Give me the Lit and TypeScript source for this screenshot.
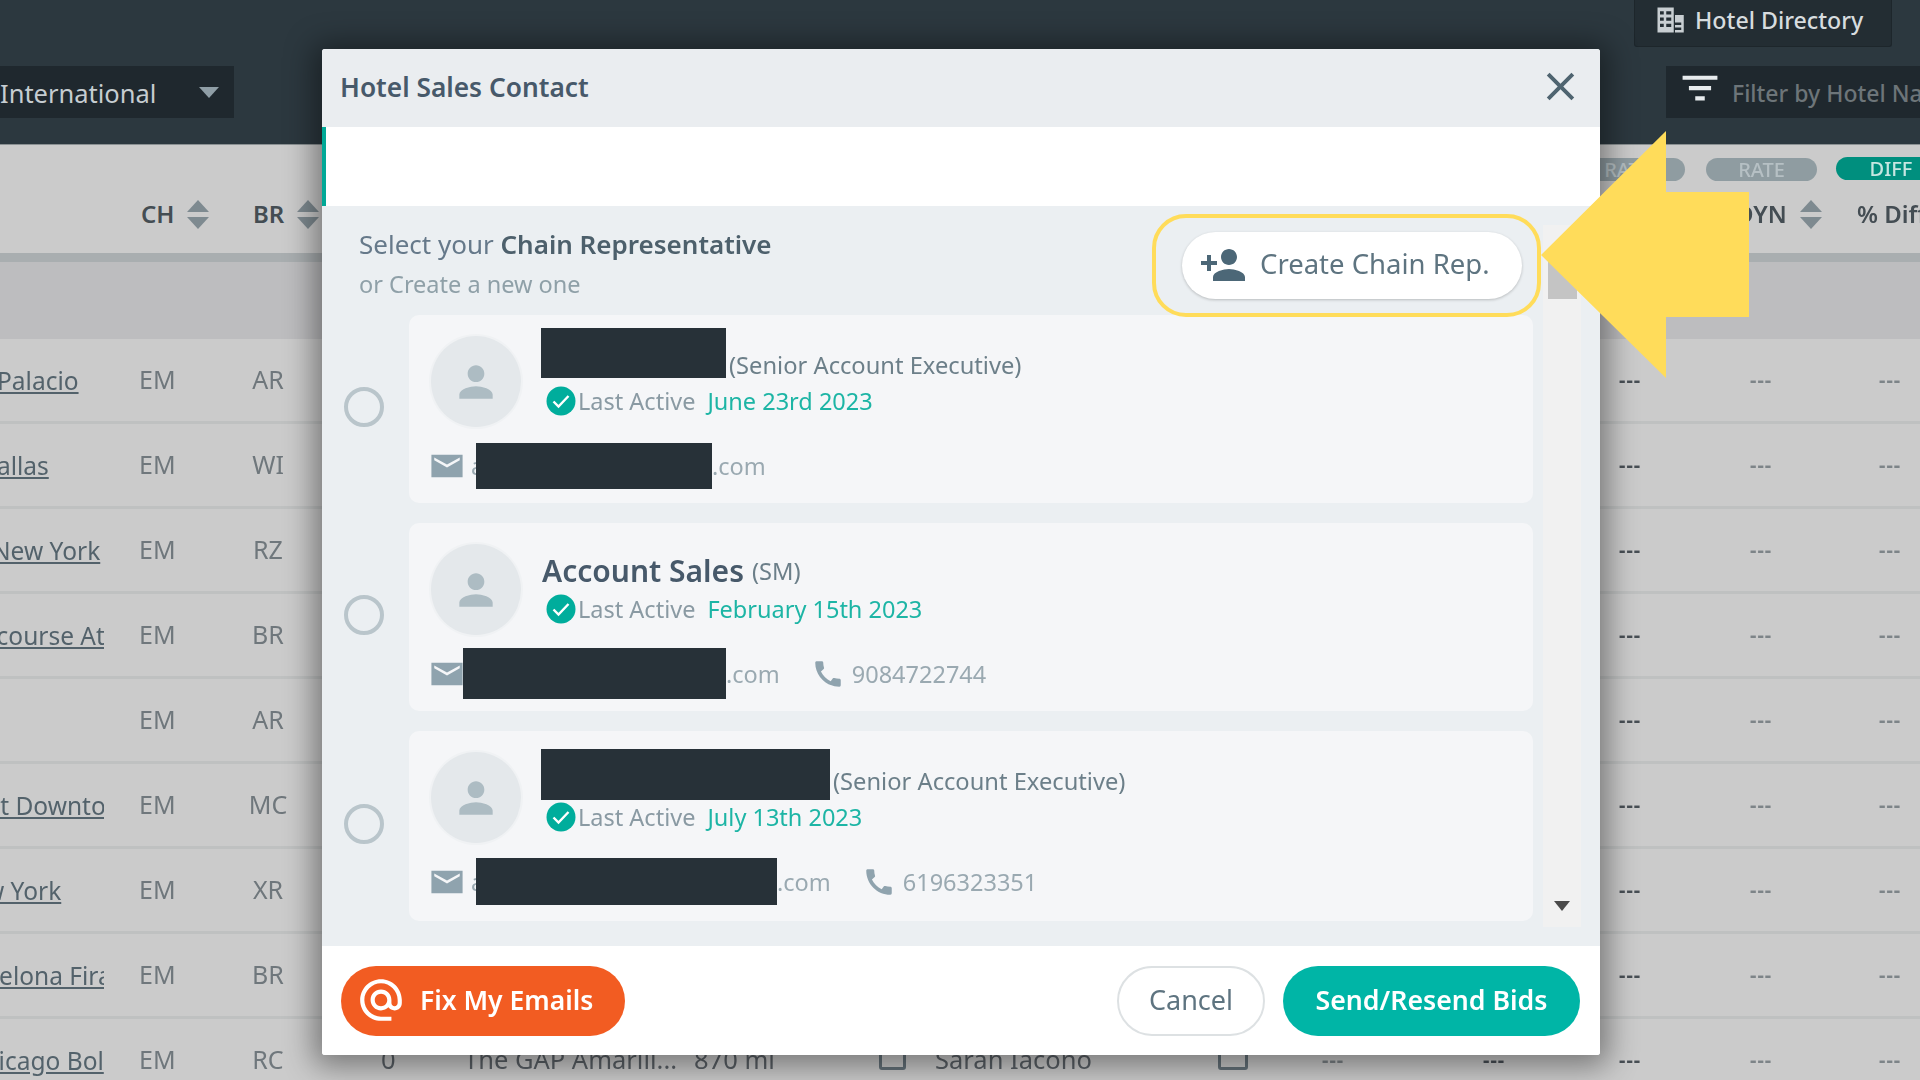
import { LitElement, html, css } from "lit";
import { customElement } from "lit/decorators.js";

const icon = (d: string, cls: string) => html`<svg class=${cls} viewBox="0 0 24 24" fill="currentColor"><path d=${d}></path></svg>`;
const P = {
  person: "M12 12c2.21 0 4-1.79 4-4s-1.79-4-4-4-4 1.79-4 4 1.79 4 4 4zm0 2c-2.67 0-8 1.34-8 4v2h16v-2c0-2.66-5.33-4-8-4z",
  add: "M15 12c2.21 0 4-1.79 4-4s-1.79-4-4-4-4 1.79-4 4 1.79 4 4 4zm-9-2V7H4v3H1v2h3v3h2v-3h3v-2H6zm9 4c-2.67 0-8 1.34-8 4v2h16v-2c0-2.66-5.33-4-8-4z",
  mail: "M23 4H1v16h22V4zm-2 4l-9 5-9-5V6l9 5 9-5v2z",
  phone: "M20.01 15.38c-1.23 0-2.42-.2-3.53-.56-.35-.12-.74-.03-1.01.24l-1.57 1.97c-2.83-1.35-5.48-3.9-6.89-6.83l1.95-1.66c.27-.28.35-.67.24-1.02-.37-1.11-.56-2.3-.56-3.53 0-.54-.45-.99-.99-.99H4.19C3.65 3 3 3.24 3 3.99 3 13.28 10.73 21 20.01 21c.71 0 .99-.63.99-1.18v-3.45c0-.54-.45-.99-.99-.99z",
  at: "M12 2C6.48 2 2 6.48 2 12s4.48 10 10 10h5v-2h-5c-4.34 0-8-3.66-8-8s3.66-8 8-8 8 3.66 8 8v1.43c0 .79-.71 1.57-1.5 1.57s-1.5-.78-1.5-1.57V12c0-2.76-2.24-5-5-5s-5 2.24-5 5 2.24 5 5 5c1.38 0 2.64-.56 3.54-1.47.65.89 1.77 1.47 2.96 1.47 1.97 0 3.5-1.6 3.5-3.57V12c0-5.52-4.48-10-10-10zm0 13c-1.66 0-3-1.34-3-3s1.34-3 3-3 3 1.34 3 3-1.34 3-3 3z",
  filter: "M1 3h22v2.6H1V3zm4 6.5h14v2.6H5V9.500zM9 16h6v2.6H9V16z",
  close: "M19 6.41L17.59 5 12 10.59 6.41 5 5 6.41 10.59 12 5 17.59 6.41 19 12 13.41 17.59 19 19 17.59 13.41 12z",
  building: "M2 2h13v20H2V2zm2 3v2.500h3V5H4zm5 0v2.500h4V5H9zM4 10v2.500h3V10H4zm5 0v2.500h4V10H9zm-5 5v2.500h3V15H4zm5 0v2.500h4V15H9zm7-7h7v14h-7v-2h5v-2h-5v-2h5v-2h-5V8z",
};

const rows = [
  ["Palacio", -3, "EM", "AR"],
  ["Dallas", -21, "EM", "WI"],
  ["New York", -8, "EM", "RZ"],
  ["Racecourse At", -58, "EM", "BR"],
  ["", 0, "EM", "AR"],
  ["Hyatt Downtown", -53, "EM", "MC"],
  ["New York", -47, "EM", "XR"],
  ["Barcelona Fira", -52, "EM", "BR"],
  ["Chicago Bol", -32, "EM", "RC"],
] as [string, number, string, string][];

const reps = [
  { redactName: [185, -36, 50], role: "(Senior Account Executive)", date: "June 23rd 2023", lead: "a", redactMail: [236, 45, -6, 46], phone: "" },
  { name: "Account Sales", role: "(SM)", date: "February 15th 2023", lead: "", redactMail: [263, 32, -9, 51], phone: "9084722744" },
  { redactName: [289, -31, 51], role: "(Senior Account Executive)", date: "July 13th 2023", lead: "a", redactMail: [301, 45, -7, 47], phone: "6196323351" },
] as any[];

@customElement("app-root")
export class AppRoot extends LitElement {
  static styles = css`
    :host { display: block; width: 1920px; height: 1080px; overflow: hidden; position: relative; font-family: "Noto Sans", sans-serif; background: #cbcbcb; }
    * { box-sizing: border-box; }
    .page { display: flex; flex-direction: column; height: 1080px; filter: blur(0.5px); }
    .top { height: 145px; background: #2c383f; position: relative; display: flex; justify-content: space-between; padding-top: 66px; flex: none; border-bottom: 1px solid #8b9193; }
    .dd { width: 234px; height: 52px; background: #1f282e; display: flex; align-items: center; justify-content: space-between; color: #c6cdd1; font-size: 25.5px; padding: 0 14px 0 0; }
    .dd span { padding-top: 2px; }
    .dd i { width: 0; height: 0; border: 10px solid transparent; border-top: 11px solid #8f9ea6; border-bottom: 0; margin-right: 1px; }
    .right { position: relative; }
    .filter { width: 254px; height: 52px; background: #1f282e; color: #6d7579; font-size: 23px; font-weight: 500; display: flex; align-items: center; padding: 2px 0 0 15px; white-space: nowrap; overflow: hidden; gap: 13px; }
    .filter svg { width: 38px; height: 38px; color: #e8ecee; flex: none; margin-top: -7px; }
    .dir { position: absolute; right: 28px; top: -66px; width: 258px; height: 47px; background: #232d33; border: 1px solid #1d262b; border-top: 0; display: flex; align-items: center; color: #d7dcdf; font-size: 23.200px; font-weight: 500; padding: 0 0 7px 20px; gap: 10px; white-space: nowrap; border-radius: 0 0 3px 3px; }
    .dir svg { width: 30px; height: 30px; color: #c8ced2; }
    .thead { height: 117px; background: #cbcbcb; flex: none; position: relative; display: flex; border-bottom: 9px solid #a9aeb0; }
    .th { position: absolute; top: 53px; display: flex; align-items: center; gap: 13px; font-size: 24px; font-weight: 600; color: #444d53; line-height: 32px; white-space: nowrap; }
    .sort { display: flex; flex-direction: column; gap: 5px; }
    .sort i { width: 0; height: 0; border: 11px solid transparent; border-top: 0; border-bottom: 12px solid #7e8a90; }
    .sort i + i { border-bottom: 0; border-top: 12px solid #7e8a90; }
    .pill { position: absolute; top: 13px; height: 23px; border-radius: 12px; color: #b6c0c4; background: #8f9ca1; font-size: 20px; font-weight: 500; display: flex; align-items: center; justify-content: center; }
    .pill.diff { background: #008f7e; color: #c6e6e1; top: 12px; }
    .band { height: 77px; background: #bdbdbf; flex: none; }
    .row { height: 85px; flex: none; border-bottom: 3px solid #bfc1c1; position: relative; display: grid; grid-template-columns: 104px 35px 92px 1fr; align-items: center; padding-bottom: 3px; font-size: 25px; color: #6f777c; }
    .nm { overflow: hidden; white-space: nowrap; color: #53626b; text-decoration: underline; font-size: 24.500px; padding-top: 3px; }
    .em { grid-column: 3; }
    .br { grid-column: 4; width: 74px; text-align: center; }
    .dash { position: absolute; top: 28px; font-size: 20px; color: #7d8488; letter-spacing: 1px; font-weight: 700; line-height: 26px; }
    .dash.k { color: #484f55; }
    .under { position: absolute; top: 23px; font-size: 25.500px; color: #5a6066; white-space: nowrap; }
    .glyph { position: absolute; top: 24px; height: 27px; border: 3px solid #65727a; border-radius: 3px; }
    .arrow { position: absolute; left: 1541px; top: 131px; width: 209px; height: 248px; }
    .modal { position: absolute; left: 322px; top: 49px; width: 1278px; height: 1006px; background: #fff; box-shadow: 0 3px 30px 8px rgba(0,0,0,.42); border-radius: 3px; display: flex; flex-direction: column; overflow: hidden; filter: blur(0.4px); }
    .mh { height: 78px; background: #eaedf0; display: flex; justify-content: space-between; align-items: center; padding: 0 16px 2px 18px; flex: none; }
    .mh b { font-size: 26.300px; font-weight: 600; color: #47596a; }
    .mh svg { width: 47px; height: 47px; color: #4f6470; margin-top: -2px; }
    .bar { height: 79px; flex: none; border-left: 4px solid #00a896; background: #fff; }
    .body { flex: 1; background: #ebeff2; display: flex; min-height: 0; }
    .main { width: 1221px; flex: none; padding-right: 10px; display: flex; flex-direction: column; }
    .head { height: 109px; flex: none; position: relative; padding: 19px 0 0 37px; }
    .sel { font-size: 26px; color: #66798a; line-height: 38px; }
    .sel b { font-weight: 600; color: #4d606c; }
    .new { font-size: 23.500px; color: #8fa0a8; line-height: 38px; margin-top: 2px; }
    .hi { position: absolute; left: 830px; top: 8px; width: 389px; height: 103px; border: 4px solid #ffdc5a; border-radius: 34px; display: flex; align-items: center; padding-left: 26px; z-index: 1; }
    .cr { width: 340px; height: 67px; border-radius: 34px; background: #fff; box-shadow: 0 1px 3px rgba(0,0,0,.22); display: flex; align-items: center; gap: 13px; padding: 0 0 4px 17px; color: #5e7480; font-size: 27.500px; white-space: nowrap; }
    .cr svg { width: 48px; height: 48px; color: #4c6777; margin-top: 2px; }
    .list { display: flex; flex-direction: column; gap: 20px; }
    .line { display: flex; align-items: center; }
    .radio { width: 40px; height: 40px; border: 4px solid #b9c5cb; border-radius: 50%; margin: 0 25px 5px 22px; flex: none; }
    .card { flex: 1; background: #f5f6f8; border-radius: 10px; padding: 21px 22px 0; height: 188px; }
    .card.c3 { height: 190px; }
    .topline { display: flex; gap: 20px; height: 91px; }
    .avatar { width: 90px; height: 91px; border-radius: 50%; background: #e4e8eb; box-shadow: 0 0 0 2px #f0f2f4; display: flex; align-items: center; justify-content: center; flex: none; }
    .avatar svg { width: 50px; height: 50px; color: #adbcc3; }
    .info { display: flex; flex-direction: column; }
    .nl { display: flex; align-items: center; height: 36px; margin-top: 9px; font-size: 23.700px; color: #6c7f89; white-space: nowrap; gap: 3px; }
    .nl.masked { padding-top: 3px; }
    .nl b { font-size: 30px; font-weight: 600; color: #47596a; margin: -2px 5px 0 1px; }
    .redact { background: #273138; position: absolute; z-index: 1; }
    .spacer { position: relative; flex: none; height: 1px; align-self: center; }
    .mailbox { position: relative; flex: none; height: 34px; line-height: 34px; }
    .la { display: flex; align-items: center; height: 36px; margin-top: 2px; font-size: 23.500px; color: #8a9aa3; white-space: nowrap; margin-left: 5px; }
    .la svg { width: 30px; height: 30px; margin-right: 2px; flex: none; }
    .la span { color: #1db5a5; margin-left: 12px; }
    .contact { display: flex; align-items: center; height: 34px; margin-top: 22px; font-size: 23.500px; color: #9aa9b1; white-space: nowrap; position: relative; }
    .contact .m { width: 34px; height: 34px; color: #8fa3ae; flex: none; margin: 0 0 0 -1px; }
    .contact .ph { width: 34px; height: 34px; color: #8fa3ae; margin: 0 7px 0 31px; flex: none; }
    .scroll { width: 38px; flex: none; margin-top: 19px; margin-bottom: 19px; background: #f1f1f1; display: flex; flex-direction: column; justify-content: space-between; align-items: center; padding-top: 37px; }
    .thumb { width: 29px; height: 37px; background: #c4c4c4; }
    .dn { width: 0; height: 0; border: 8px solid transparent; border-top: 10px solid #4a4a4a; border-bottom: 0; margin-bottom: 16px; }
    .mf { height: 109px; flex: none; background: #fff; display: flex; align-items: center; padding: 1px 20px 0 19px; }
    .btn { height: 70px; border-radius: 35px; display: flex; align-items: center; justify-content: center; white-space: nowrap; padding-bottom: 3px; }
    .fix { width: 284px; background: #f25c22; color: #fff; font-weight: 600; font-size: 26.500px; gap: 14px; margin-right: auto; justify-content: flex-start; padding-left: 15px; }
    .fix svg { width: 50px; height: 50px; margin-top: 1px; }
    .cancel { width: 148px; background: #fff; border: 2px solid #dde1e3; color: #5e7480; font-size: 27px; margin-right: 18px; }
    .send { width: 297px; background: #00b5a6; color: #fff; font-weight: 600; font-size: 26.700px; }
  `;

  renderRep(r: any, i: number) {
    return html`<div class="line">
      <div class="radio"></div>
      <div class="card ${i === 2 ? "c3" : ""}">
        <div class="topline">
          <div class="avatar">${icon(P.person, "")}</div>
          <div class="info">
            <div class="nl ${r.redactName ? "masked" : ""}">
              ${r.redactName
                ? html`<div class="spacer" style="width:${r.redactName[0]}px"><div class="redact" style="left:0;top:${r.redactName[1]}px;width:${r.redactName[0]}px;height:${r.redactName[2]}px"></div></div>`
                : html`<b>${r.name}</b>`}
              ${r.role}
            </div>
            <div class="la">
              <svg viewBox="0 0 30 30"><circle cx="15" cy="15" r="14.500" fill="#00ad9c"></circle><path d="M7.500 15.500l5 5 10-10.500" fill="none" stroke="#fff" stroke-width="2.400"></path></svg>
              Last Active<span>${r.date}</span>
            </div>
          </div>
        </div>
        <div class="contact">
          ${icon(P.mail, "m")}
          <div class="mailbox" style="width:${r.redactMail[1] + r.redactMail[0] - 33}px">
            ${r.lead ? html`<span style="padding-left:7px">${r.lead}</span>` : ""}
            <div class="redact" style="left:${r.redactMail[1] - 33}px;top:${r.redactMail[2]}px;width:${r.redactMail[0]}px;height:${r.redactMail[3]}px"></div>
          </div>.com
          ${r.phone ? html`${icon(P.phone, "ph")}${r.phone}` : ""}
        </div>
      </div>
    </div>`;
  }

  render() {
    return html`
      <div class="page">
        <div class="top">
          <div class="dd"><span>International</span><i></i></div>
          <div class="right">
            <div class="dir">${icon(P.building, "")}Hotel Directory</div>
            <div class="filter">${icon(P.filter, "")}Filter by Hotel Name</div>
          </div>
        </div>
        <div class="thead">
          <div class="th" style="left:141px">CH<div class="sort"><i></i><i></i></div></div>
          <div class="th" style="left:253px">BR<div class="sort"><i></i><i></i></div></div>
          <div class="pill" style="left:1570px;width:115px">RATE</div>
          <div class="pill" style="left:1706px;width:111px">RATE</div>
          <div class="pill diff" style="left:1836px;width:110px">DIFF</div>
          <div class="th" style="left:1736px">DYN<div class="sort"><i></i><i></i></div></div>
          <div class="th" style="left:1857px">% Diff</div>
        </div>
        <div class="band"></div>
        ${rows.map((r, i) => html`<div class="row">
          <div class="nm"><span style="margin-left:${r[1]}px">${r[0]}</span></div>
          <div class="em">${r[2]}</div>
          <div class="br">${r[3]}</div>
          ${i === 8 ? html`
            <div class="under" style="left:381px">0</div>
            <div class="under" style="left:464px">The GAP Amarili...</div>
            <div class="under" style="left:694px">870 mi</div>
            <div class="glyph" style="left:879px;width:27px"></div>
            <div class="under" style="left:935px">Sarah Iacono</div>
            <div class="glyph" style="left:1218px;width:30px"></div>
            <div class="dash" style="left:1322px">---</div>
            <div class="dash k" style="left:1483px">---</div>` : ""}
          <div class="dash k" style="left:1619px">---</div>
          <div class="dash" style="left:1750px">---</div>
          <div class="dash" style="left:1879px">---</div>
        </div>`)}
      </div>
      <div class="modal">
        <div class="mh"><b>Hotel Sales Contact</b>${icon(P.close, "")}</div>
        <div class="bar"></div>
        <div class="body">
          <div class="main">
            <div class="head">
              <div class="sel">Select your <b>Chain Representative</b></div>
              <div class="new">or Create a new one</div>
              <div class="hi"><div class="cr">${icon(P.add, "")}Create Chain Rep.</div></div>
            </div>
            <div class="list">${reps.map((r, i) => this.renderRep(r, i))}</div>
          </div>
          <div class="scroll"><div class="thumb"></div><div class="dn"></div></div>
        </div>
        <div class="mf">
          <div class="btn fix">${icon(P.at, "")}Fix My Emails</div>
          <div class="btn cancel">Cancel</div>
          <div class="btn send">Send/Resend Bids</div>
        </div>
      </div>
      <svg class="arrow" viewBox="0 0 209 248"><polygon fill="#ffdc5a" points="0,124 125,0 125,61 208,61 208,186 125,186 125,247"></polygon></svg>
    `;
  }
}
